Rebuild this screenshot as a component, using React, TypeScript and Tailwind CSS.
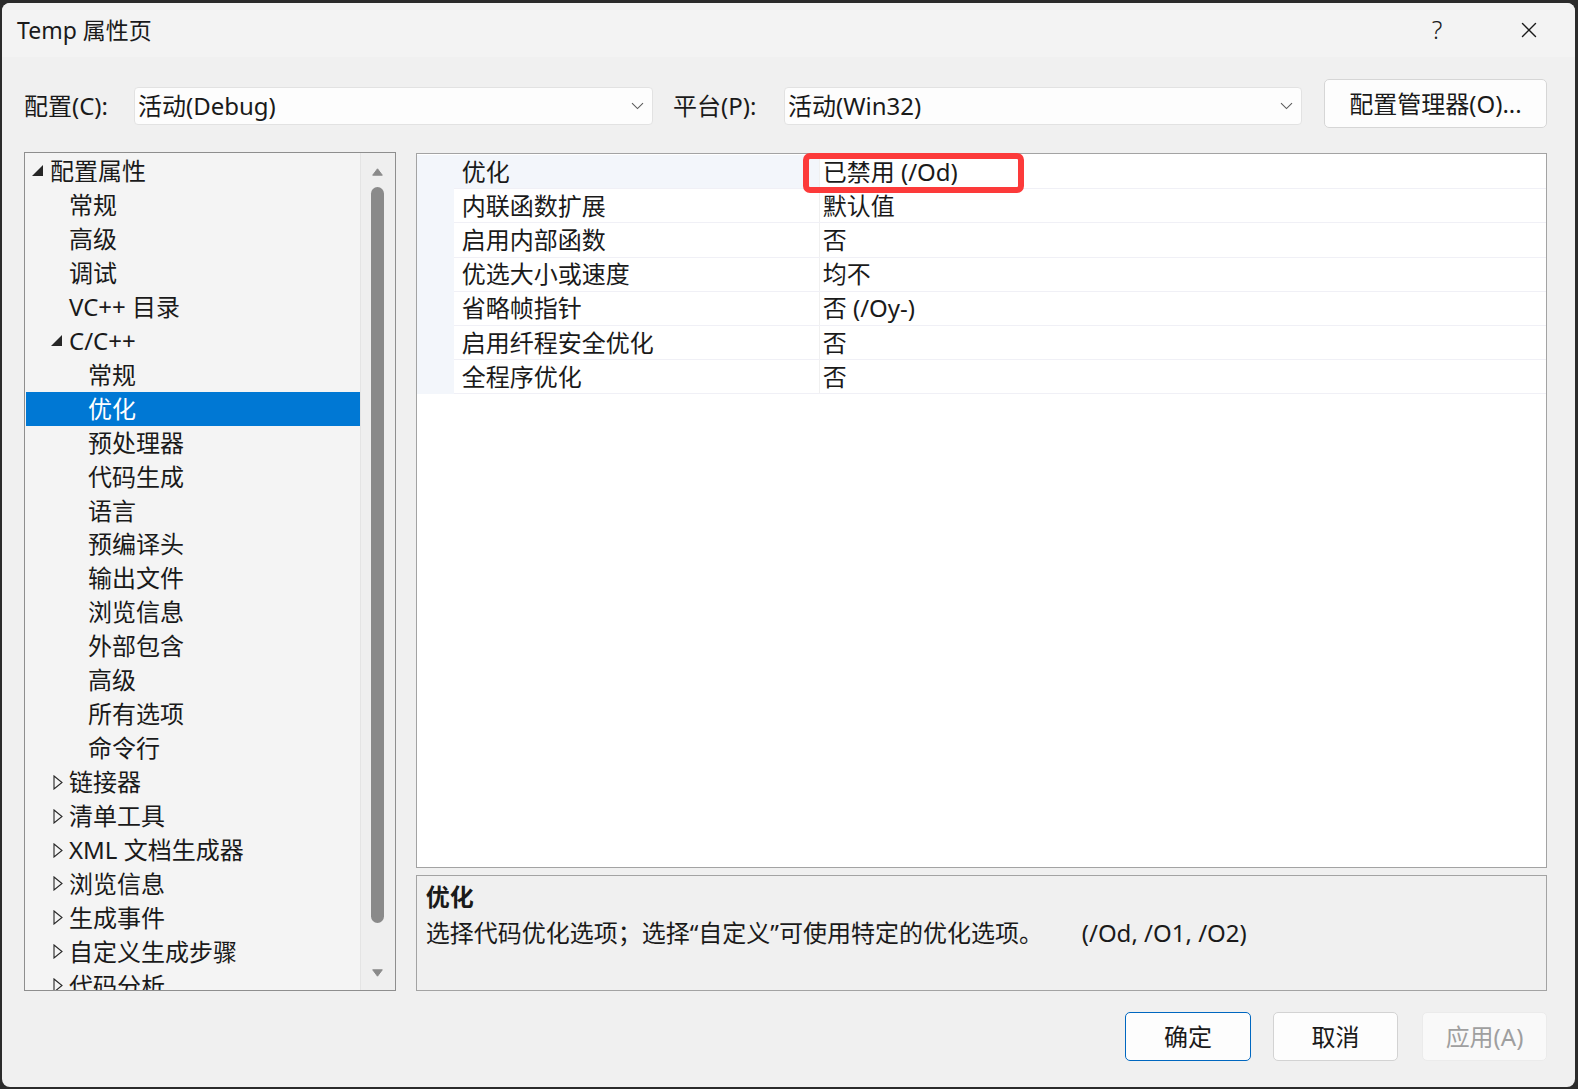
import { X } from 'lucide-react';

type TreeItem = {
  label: string;
  level: 1 | 2 | 3;
  arrow?: 'open' | 'closed';
  selected?: boolean;
};

const treeItems: TreeItem[] = [
  { label: '配置属性', level: 1, arrow: 'open' },
  { label: '常规', level: 2 },
  { label: '高级', level: 2 },
  { label: '调试', level: 2 },
  { label: 'VC++ 目录', level: 2 },
  { label: 'C/C++', level: 2, arrow: 'open' },
  { label: '常规', level: 3 },
  { label: '优化', level: 3, selected: true },
  { label: '预处理器', level: 3 },
  { label: '代码生成', level: 3 },
  { label: '语言', level: 3 },
  { label: '预编译头', level: 3 },
  { label: '输出文件', level: 3 },
  { label: '浏览信息', level: 3 },
  { label: '外部包含', level: 3 },
  { label: '高级', level: 3 },
  { label: '所有选项', level: 3 },
  { label: '命令行', level: 3 },
  { label: '链接器', level: 2, arrow: 'closed' },
  { label: '清单工具', level: 2, arrow: 'closed' },
  { label: 'XML 文档生成器', level: 2, arrow: 'closed' },
  { label: '浏览信息', level: 2, arrow: 'closed' },
  { label: '生成事件', level: 2, arrow: 'closed' },
  { label: '自定义生成步骤', level: 2, arrow: 'closed' },
  { label: '代码分析', level: 2, arrow: 'closed' },
];

const props = [
  ['优化', '已禁用 (/Od)'],
  ['内联函数扩展', '默认值'],
  ['启用内部函数', '否'],
  ['优选大小或速度', '均不'],
  ['省略帧指针', '否 (/Oy-)'],
  ['启用纤程安全优化', '否'],
  ['全程序优化', '否'],
];

const Chevron = () => (
  <svg width="13" height="8" viewBox="0 0 13 8" className="shrink-0">
    <path d="M1 1.2 L6.5 6.6 L12 1.2" fill="none" stroke="#5c5c5c" strokeWidth="1.1" />
  </svg>
);

const Combo = ({ value, width }: { value: string; width: string }) => (
  <div
    className={`${width} h-[38px] mt-[8px] flex items-center justify-between pl-[3px] pr-[8px] bg-[#fdfdfd] border border-[#e2e2e2] rounded-[4px]`}
  >
    <span>{value}</span>
    <Chevron />
  </div>
);

const TreeRow = ({ item }: { item: TreeItem }) => {
  const pad = item.level === 1 ? 'pl-[6px]' : item.level === 2 ? 'pl-[25px]' : 'pl-[44px]';
  return (
    <div
      className={`h-[33.96px] flex items-center ml-[1px] ${pad} ${
        item.selected ? 'bg-[#0078d4] text-white' : ''
      }`}
    >
      <div className="w-[18px] h-full flex items-center shrink-0">
        {item.arrow === 'open' && (
          <svg width="11" height="11" viewBox="0 0 11 11">
            <path d="M11 0 L11 11 L0 11 Z" fill="#262626" />
          </svg>
        )}
        {item.arrow === 'closed' && (
          <svg width="11" height="15" viewBox="0 0 11 15" className="ml-[2px]">
            <path d="M1 1 L9 7.5 L1 14 Z" fill="none" stroke="#262626" strokeWidth="1.1" />
          </svg>
        )}
      </div>
      <span className="whitespace-nowrap">{item.label}</span>
    </div>
  );
};

export default function App() {
  return (
    <div className="w-[1578px] h-[1089px] bg-[#2b2b2b] pt-[3px] pl-[2px] overflow-hidden font-['Noto_Sans','Noto_Sans_CJK_SC',sans-serif] text-[#1a1a1a]">
      <div className="w-[1573px] h-[1084px] rounded-[8px] bg-[#f0f0f0] flex flex-col overflow-hidden">
        {/* title bar */}
        <div className="h-[54px] shrink-0 bg-[#f3f3f3] flex items-center pl-[15px] pr-[23px]">
          <span className="flex-1 text-[23px]">Temp 属性页</span>
          <div className="w-[46px] flex justify-center text-[25px] font-light">?</div>
          <div className="w-[46px] ml-[46px] flex justify-center">
            <X size={26} strokeWidth={1.3} color="#1a1a1a" />
          </div>
        </div>

        {/* body */}
        <div className="flex-1 pl-[22px] pr-[28px] pt-[22px] text-[24px] leading-none">
          <div className="flex h-[49px]">
            <div className="w-[110px] h-[38px] mt-[8px] flex items-center">配置(C):</div>
            <Combo value="活动(Debug)" width="w-[519px]" />
            <div className="w-[111px] ml-[20px] h-[38px] mt-[8px] flex items-center">平台(P):</div>
            <Combo value="活动(Win32)" width="w-[518px]" />
            <button className="ml-[22px] w-[223px] h-[49px] bg-[#fdfdfd] border border-[#d6d6d6] rounded-[5px] flex items-center justify-center">
              配置管理器(O)...
            </button>
          </div>

          <div className="mt-[24px] flex h-[839px]">
            {/* tree */}
            <div className="w-[372px] h-full border border-[#8e8e8e] bg-[#f4f4f4] flex">
              <div className="flex-1 overflow-hidden pt-[1px]">
                {treeItems.map((item, i) => (
                  <TreeRow key={i} item={item} />
                ))}
              </div>
              <div className="w-[35px] h-full bg-[#efefef] border-l border-[#e4e4e4] flex flex-col items-center">
                <div className="h-[34px] flex items-center justify-center pt-[3px]">
                  <svg width="11" height="8" viewBox="0 0 11 8">
                    <path d="M5.5 0.8 L10.3 7.2 L0.7 7.2 Z" fill="#8a8a8a" stroke="#8a8a8a" strokeLinejoin="round" />
                  </svg>
                </div>
                <div className="w-[13px] h-[736px] rounded-full bg-[#8a8a8a]" />
                <div className="mt-[46px]">
                  <svg width="11" height="8" viewBox="0 0 11 8">
                    <path d="M5.5 7.2 L10.3 0.8 L0.7 0.8 Z" fill="#8a8a8a" stroke="#8a8a8a" strokeLinejoin="round" />
                  </svg>
                </div>
              </div>
            </div>

            {/* right column */}
            <div className="ml-[20px] w-[1132px] pt-[1px] flex flex-col">
              <div className="relative h-[715px] border border-[#a3a3a3] bg-white pt-[1px]">
                {props.map(([name, value], i) => (
                  <div key={i} className="h-[34.2px] flex">
                    <div className="w-[37px] bg-[#f3f6fb]" />
                    <div className="flex-1 flex border-b border-[#f0f0f6]">
                      <div
                        className={`w-[365px] pl-[8px] flex items-center ${
                          i === 0 ? 'bg-[#f3f6fb]' : ''
                        }`}
                      >
                        {name}
                      </div>
                      <div className="flex-1 border-l border-[#f0f0f0] pl-[3px] flex items-center">
                        {value}
                      </div>
                    </div>
                  </div>
                ))}
                {/* annotation */}
                <div className="absolute left-[386px] top-[-1px] w-[221px] h-[40px] border-[6px] border-[#fc3a3a] rounded-[7px]" />
              </div>

              <div className="mt-[7px] h-[116px] border border-[#a3a3a3] bg-[#f0f0f0] pl-[9px] pt-[2px]">
                <div className="h-[37px] flex items-center font-bold">优化</div>
                <div className="h-[36px] flex items-center whitespace-nowrap">
                  <span className="inline-block w-[656px]">
                    选择代码优化选项；选择“自定义”可使用特定的优化选项。
                  </span>
                  <span>(/Od, /O1, /O2)</span>
                </div>
              </div>
            </div>
          </div>

          {/* buttons */}
          <div className="mt-[21px] flex justify-end">
            <button className="w-[126px] h-[49px] bg-[#fdfdfd] border border-[#0067c0] rounded-[5px]">
              确定
            </button>
            <button className="ml-[22px] w-[125px] h-[49px] bg-[#fdfdfd] border border-[#d3d3d3] rounded-[5px]">
              取消
            </button>
            <button className="ml-[24px] w-[125px] h-[49px] bg-[#f9f9f9] border border-[#ebebeb] rounded-[5px] text-[#9f9f9f]">
              应用(A)
            </button>
          </div>
        </div>
      </div>
    </div>
  );
}
